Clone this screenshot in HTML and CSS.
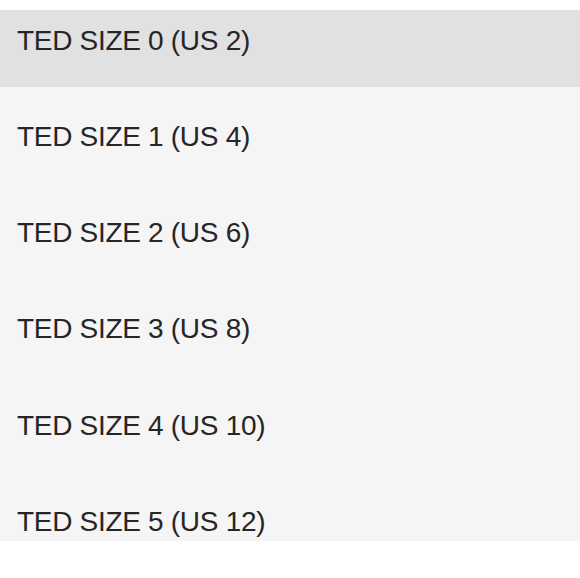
FILE: index.html
```html
<!DOCTYPE html>
<html>
<head>
<meta charset="utf-8">
<link rel="stylesheet" href="styles.css">
</head>
<body>
<div class="menu">
  <ul class="options">
    <li class="option active">TED SIZE 0 (US 2)</li>
    <li class="option">TED SIZE 1 (US 4)</li>
    <li class="option">TED SIZE 2 (US 6)</li>
    <li class="option">TED SIZE 3 (US 8)</li>
    <li class="option">TED SIZE 4 (US 10)</li>
    <li class="option">TED SIZE 5 (US 12)</li>
  </ul>
</div>
</body>
</html>
```
FILE: styles.css
```css
html, body {
  margin: 0;
  padding: 0;
  background: #ffffff;
}
.menu {
  margin-top: 10px;
  height: 531px;
  overflow: hidden;
  background: #f5f5f5;
}
.options {
  list-style: none;
  margin: -19.2px 0 0 0;
  padding: 0;
}
.option {
  box-sizing: border-box;
  height: 96.2px;
  display: flex;
  align-items: center;
  padding: 4px 0 0 17px;
  font-family: "Liberation Sans", Arial, sans-serif;
  font-size: 28px;
  color: #262626;
  letter-spacing: -0.3px;
  line-height: 1;
}
.option.active {
  background: #e1e1e1;
}
```
